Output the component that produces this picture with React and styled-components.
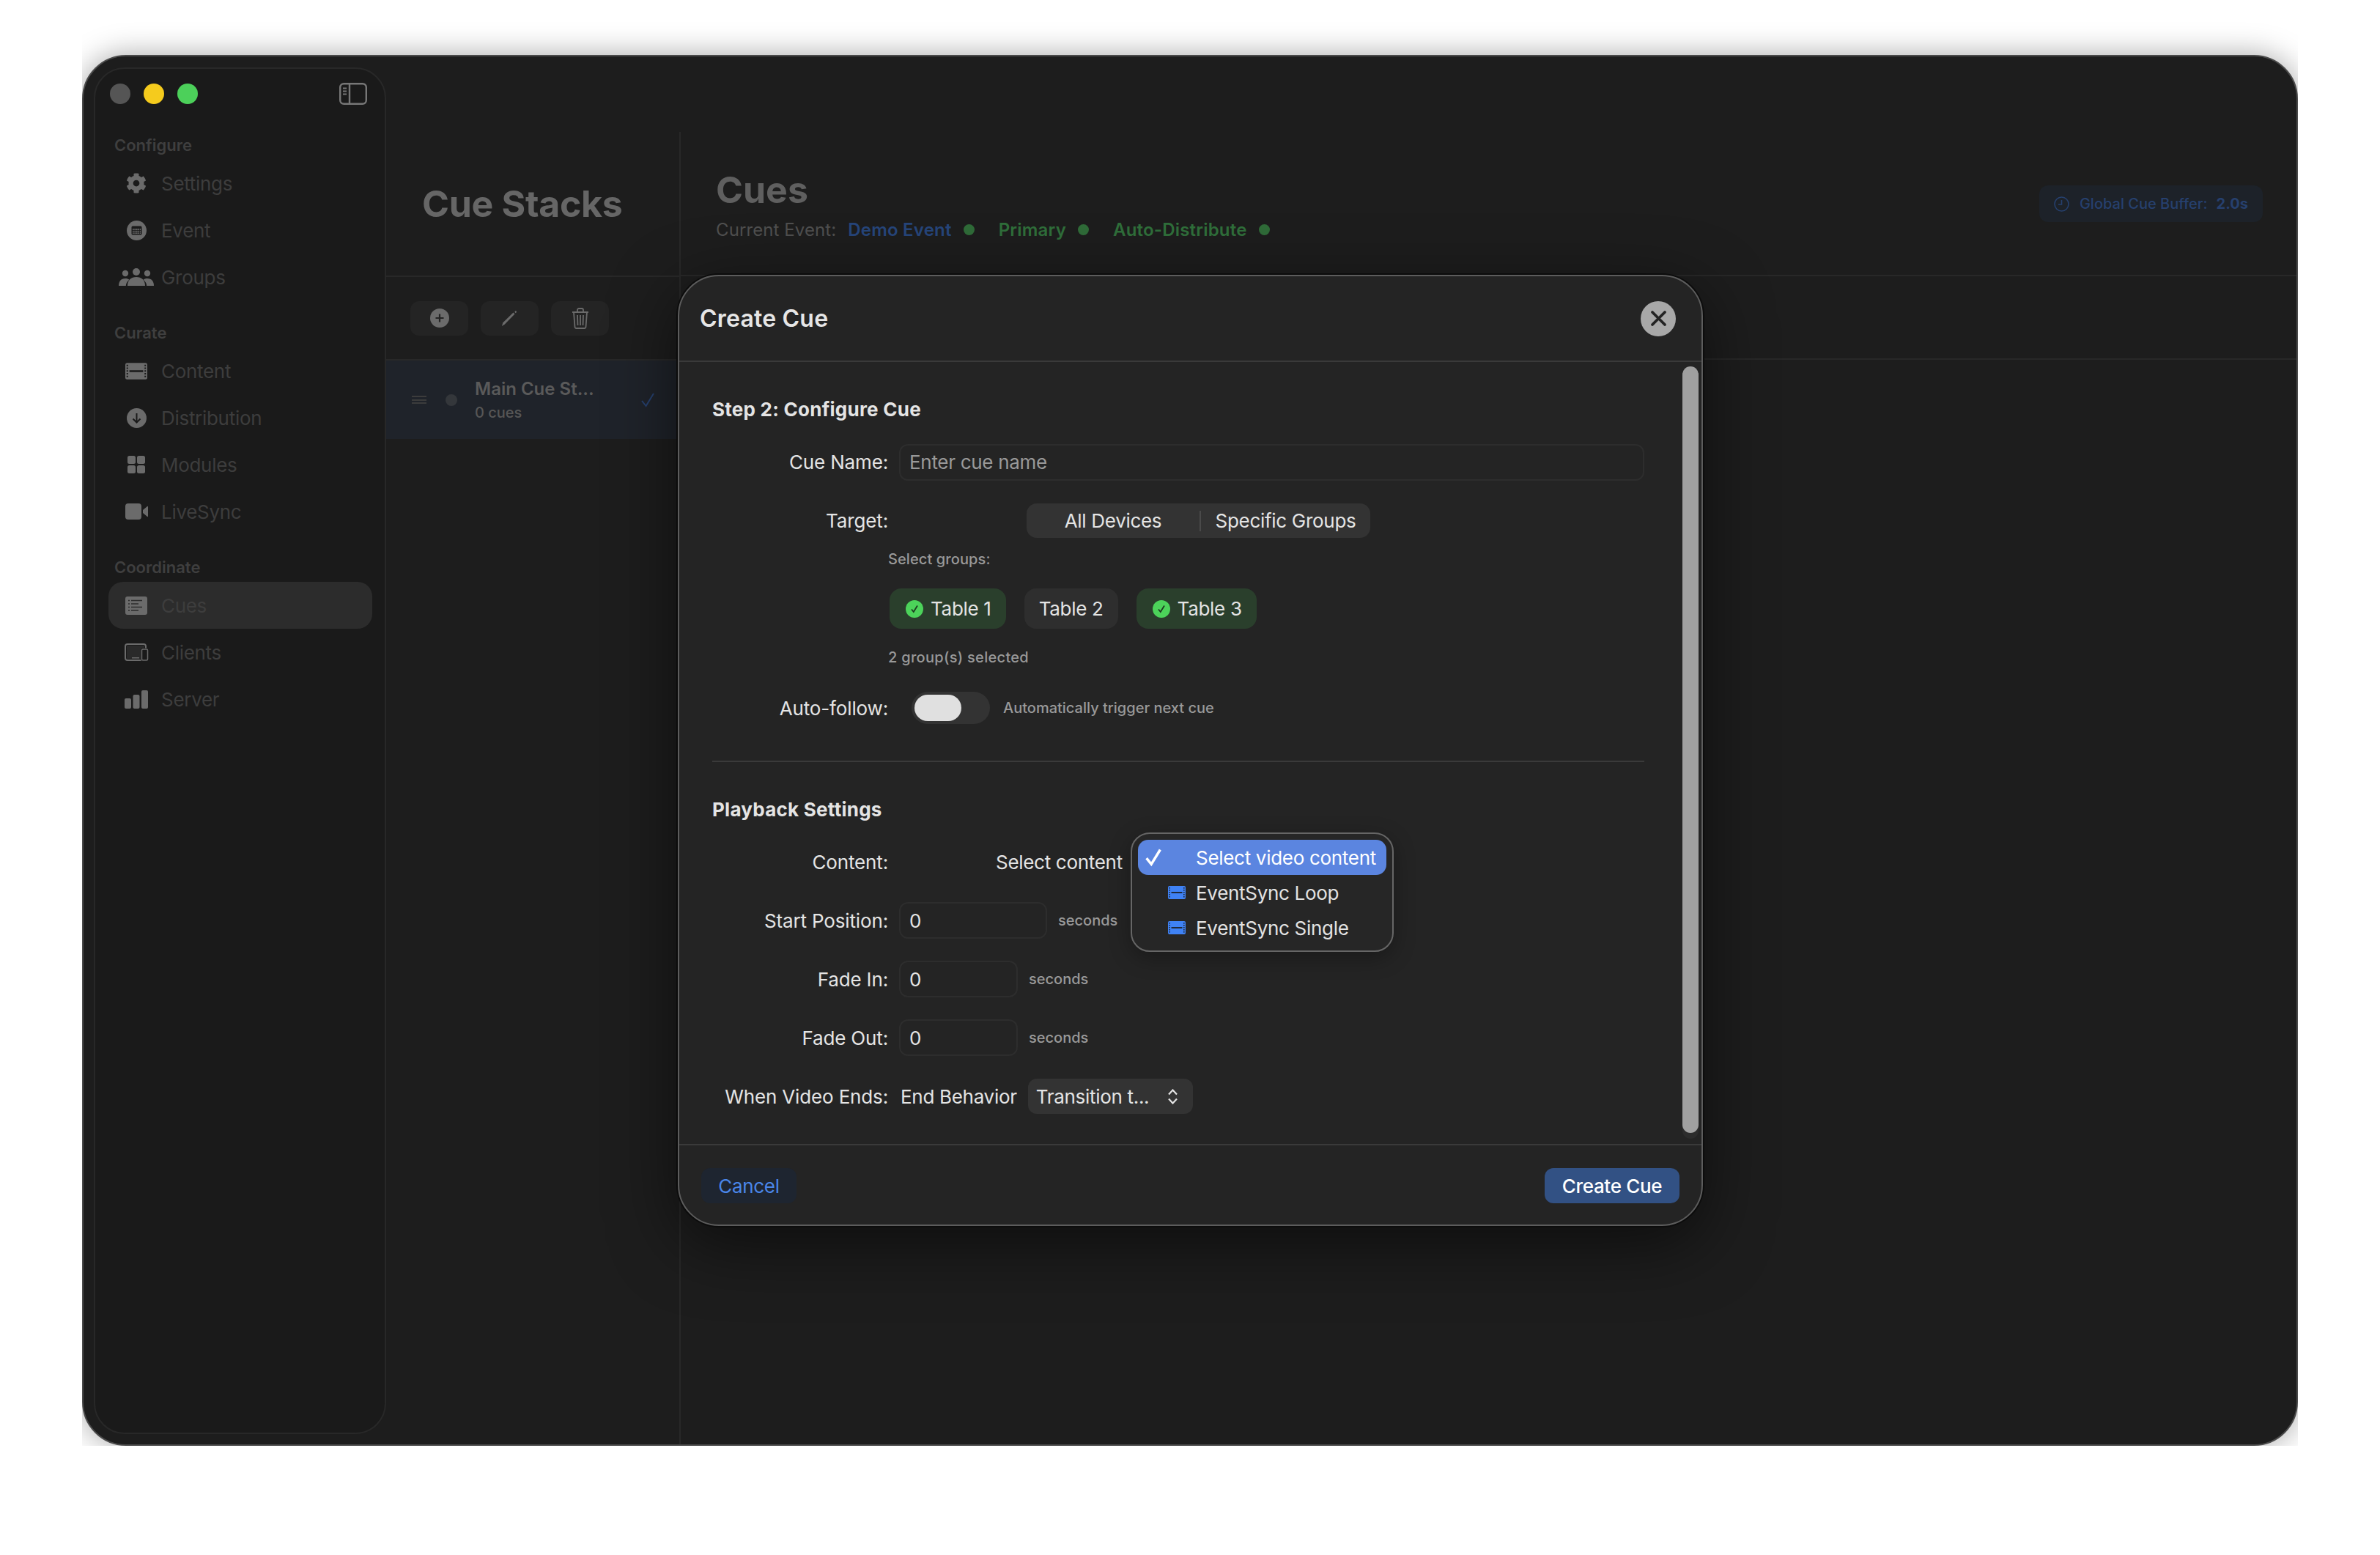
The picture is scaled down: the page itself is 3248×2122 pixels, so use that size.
import React from "react";
import styled, { createGlobalStyle } from "styled-components";
import { FaCog } from "react-icons/fa";

const GlobalStyle = createGlobalStyle`
  html, body {
    margin: 0;
    padding: 0;
    background: #fff;
    font-family: Inter, "Liberation Sans", sans-serif;
    -webkit-font-smoothing: antialiased;
  }
  * {
    box-sizing: border-box;
  }
`;

/* drawn icons */
const FilmIcon = ({ w = 24, h = 18, fill = "#3f82f5", ink = "#1f2a3c" }) => (
  <svg width={w} height={h} viewBox="0 0 24 18">
    <rect width="24" height="18" rx="2" fill={fill} />
    <rect x="4.5" y="8" width="15" height="2" fill={ink} />
    <rect x="4.5" y="1.5" width="15" height="5.5" fill={fill} />
    {[2, 5, 8, 11, 14].map((y) => (
      <g key={y} fill={ink}>
        <rect x="1.4" y={y} width="1.6" height="1.6" />
        <rect x="21" y={y} width="1.6" height="1.6" />
      </g>
    ))}
  </svg>
);

const EventIcon = () => (
  <svg width="27" height="27" viewBox="0 0 27 27">
    <circle cx="13.5" cy="13.5" r="13.5" fill="currentColor" />
    <rect x="6.5" y="7.5" width="14" height="12" rx="1.5" fill="#1a1a1a" />
    <rect x="8" y="11" width="11" height="7" fill="#6b6b6b" />
    <path d="M10 11v7M12.5 11v7M15 11v7M17.5 11v7M8 13.5h11M8 16h11" stroke="#1a1a1a" strokeWidth="0.8" />
  </svg>
);

const GroupsIcon = () => (
  <svg width="48" height="24" viewBox="0 0 48 24" fill="currentColor">
    <circle cx="24" cy="5" r="5" />
    <circle cx="9" cy="7" r="4.2" />
    <circle cx="39" cy="7" r="4.2" />
    <path d="M12 24c0-8 5-12 12-12s12 4 12 12z" />
    <path d="M0 24c0-6 3-10 9-10 2.4 0 4 .6 5.4 1.8C11.6 18 10 20.600 9.800 24z" />
    <path d="M48 24c0-6-3-10-9-10-2.400 0-4 .6-5.400 1.800 2.800 2.200 4.400 4.800 4.600 8.200z" />
  </svg>
);

const DistributionIcon = () => (
  <svg width="27" height="27" viewBox="0 0 27 27">
    <circle cx="13.5" cy="13.5" r="13.5" fill="currentColor" />
    <path d="M13.5 7v12M8.500 14.500l5 5 5-5" fill="none" stroke="#1a1a1a" strokeWidth="2" />
  </svg>
);

const ModulesIcon = () => (
  <svg width="24" height="24" viewBox="0 0 24 24" fill="currentColor">
    <rect width="11" height="11" rx="2.500" />
    <rect x="13" width="11" height="11" rx="2.500" />
    <rect y="13" width="11" height="11" rx="2.500" />
    <rect x="13" y="13" width="11" height="11" rx="2.500" />
  </svg>
);

const VideoIcon = () => (
  <svg width="31" height="22" viewBox="0 0 31 22" fill="currentColor">
    <rect width="22" height="22" rx="4" />
    <path d="M24 9l6-5c.5-.4 1-.1 1 .5v13c0 .6-.5.9-1 .5l-6-5z" />
  </svg>
);

const CuesIcon = () => (
  <svg width="30" height="25" viewBox="0 0 30 25">
    <rect width="30" height="25" rx="3" fill="currentColor" />
    <path d="M8 5.500h15M8 10h10M8 14.500h15M8 19h10M4 5.500h2M4 10h2M4 14.500h2M4 19h2" stroke="#2c2c2c" strokeWidth="1.600" />
  </svg>
);

const ClientsIcon = () => (
  <svg width="33" height="24" viewBox="0 0 33 24">
    <rect x="1" y="1" width="28" height="22" rx="3" fill="none" stroke="currentColor" strokeWidth="2" />
    <rect x="3" y="3" width="24" height="18" fill="#2a2a2a" />
    <rect x="10" y="19" width="10" height="1.500" fill="currentColor" />
    <rect x="22" y="6.500" width="11" height="17.500" rx="2" fill="#1a1a1a" />
    <rect x="23.500" y="8" width="8" height="15" rx="1.500" fill="none" stroke="currentColor" strokeWidth="1.500" />
  </svg>
);

const ServerIcon = () => (
  <svg width="32" height="25" viewBox="0 0 32 25" fill="currentColor">
    <rect y="11" width="9" height="14" rx="2" />
    <rect x="11.500" y="6" width="9" height="19" rx="2" />
    <rect x="23" width="9" height="25" rx="2" />
  </svg>
);

const PlusIcon = () => (
  <svg width="26" height="26" viewBox="0 0 26 26">
    <circle cx="13" cy="13" r="13" fill="#6b6b6b" />
    <path d="M13 7.500v11M7.500 13h11" stroke="#232323" strokeWidth="2.200" />
  </svg>
);

const PencilIcon = () => (
  <svg width="21" height="21" viewBox="0 0 21 21" fill="#6b6b6b">
    <path d="M0 21l1.200-4.500L15.500 2.500l2 2L3.800 18.500z" />
    <path d="M18 .5l1.300-.5.700 2-1.300 1.300-1.300-1.300z" />
  </svg>
);

const TrashIcon = () => (
  <svg width="24" height="29" viewBox="0 0 24 29" fill="none" stroke="#6b6b6b" strokeWidth="1.800">
    <path d="M1 6h22M8 6V3c0-1 .8-2 2-2h4c1.200 0 2 1 2 2v3" />
    <path d="M3 6l1.500 20c.1 1.200 1 2 2 2h11c1 0 1.900-.8 2-2L21 6" />
    <path d="M8 10l.5 14M12 10v14M16 10l-.5 14" />
  </svg>
);

const ClockIcon = () => (
  <svg width="21" height="21" viewBox="0 0 21 21" fill="none" stroke="#26406e" strokeWidth="1.600">
    <circle cx="10.500" cy="10.500" r="9.500" />
    <path d="M10.500 5v6H6" />
  </svg>
);

const SidebarIcon = () => (
  <svg width="38" height="30" viewBox="0 0 38 30" fill="none" stroke="#777" strokeWidth="2.400">
    <rect x="1.200" y="1.200" width="35.600" height="27.600" rx="5" />
    <path d="M14 1.200v27.600" />
    <path d="M5 7.500h5M5 11.500h5M5 15.500h5" strokeWidth="2" />
  </svg>
);

const CheckGlyph = ({ size = 12, color = "#1d3a20", width = 1.800 }) => (
  <svg width={size} height={size} viewBox="0 0 12 12" fill="none" stroke={color} strokeWidth={width}>
    <path d="M2 6.500l2.800 3.500L10 1.500" />
  </svg>
);

const Chevrons = () => (
  <svg width="15" height="21" viewBox="0 0 15 21" fill="none" stroke="#e2e2e2" strokeWidth="2.200">
    <path d="M2 7.500l5.500-6 5.500 6M2 13.500l5.500 6 5.500-6" />
  </svg>
);

const CloseX = () => (
  <svg width="23" height="23" viewBox="0 0 23 23" fill="none" stroke="#232323" strokeWidth="3.800" strokeLinecap="round">
    <path d="M3 3l17 17M20 3L3 20" />
  </svg>
);

const navSections = [
  {
    title: "Configure",
    items: [
      { label: "Settings", icon: <FaCog size={28} /> },
      { label: "Event", icon: <EventIcon /> },
      { label: "Groups", icon: <GroupsIcon /> },
    ],
  },
  {
    title: "Curate",
    items: [
      { label: "Content", icon: <FilmIcon w={30} h={23} fill="#6b6b6b" ink="#1a1a1a" /> },
      { label: "Distribution", icon: <DistributionIcon /> },
      { label: "Modules", icon: <ModulesIcon /> },
      { label: "LiveSync", icon: <VideoIcon /> },
    ],
  },
  {
    title: "Coordinate",
    items: [
      { label: "Cues", icon: <CuesIcon />, active: true },
      { label: "Clients", icon: <ClientsIcon /> },
      { label: "Server", icon: <ServerIcon /> },
    ],
  },
];

const timingRows = [
  { label: "Start Position:", width: 202 },
  { label: "Fade In:", width: 162 },
  { label: "Fade Out:", width: 162 },
];

export default function App() {
  return (
    <>
      <GlobalStyle />
      <Frame>
        <Window>
          <Sidebar>
            <TitleBar>
              <Lights>
                <Light $color="#555555" />
                <Light $color="#f5cb1d" />
                <Light $color="#4cd05a" />
              </Lights>
              <SidebarIcon />
            </TitleBar>
            <Nav>
              {navSections.map((section) => (
                <NavSection key={section.title}>
                  <SectionLabel>{section.title}</SectionLabel>
                  {section.items.map((item) => (
                    <NavItem key={item.label} $active={item.active}>
                      <NavIcon>{item.icon}</NavIcon>
                      {item.label}
                    </NavItem>
                  ))}
                </NavSection>
              ))}
            </Nav>
          </Sidebar>

          <StacksColumn>
            <StacksPane>
              <StacksHeader>Cue Stacks</StacksHeader>
              <Toolbar>
                <ToolButton><PlusIcon /></ToolButton>
                <ToolButton><PencilIcon /></ToolButton>
                <ToolButton><TrashIcon /></ToolButton>
              </Toolbar>
              <StackRow>
                <DragHandle />
                <StackDot />
                <StackText>
                  <StackName>Main Cue St...</StackName>
                  <StackCount>0 cues</StackCount>
                </StackText>
                <StackCheck>
                  <CheckGlyph size={24} color="#26406e" width={1.000} />
                </StackCheck>
              </StackRow>
            </StacksPane>
          </StacksColumn>

          <CuesColumn>
            <CuesHeader>
              <div>
                <CuesTitle>Cues</CuesTitle>
                <StatusLine>
                  <StatusLabel>Current Event:</StatusLabel>
                  <StatusValue $color="#26457a">Demo Event</StatusValue>
                  <StatusDot />
                  <StatusValue $color="#2f6e3a">Primary</StatusValue>
                  <StatusDot />
                  <StatusValue $color="#2f6e3a">Auto-Distribute</StatusValue>
                  <StatusDot />
                </StatusLine>
              </div>
              <BufferBadge>
                <ClockIcon />
                <span>Global Cue Buffer:</span>
                <BufferValue>2.0s</BufferValue>
              </BufferBadge>
            </CuesHeader>
            <CuesToolbar />
          </CuesColumn>

          <Modal>
            <ModalHeader>
              <ModalTitle>Create Cue</ModalTitle>
              <CloseButton><CloseX /></CloseButton>
            </ModalHeader>

            <ModalBody>
              <SectionHeading>Step 2: Configure Cue</SectionHeading>

              <FormRow $top={29} $height={51}>
                <FieldLabel>Cue Name:</FieldLabel>
                <TextBox $grow $muted>Enter cue name</TextBox>
              </FormRow>

              <FormRow $top={31} $height={47}>
                <FieldLabel>Target:</FieldLabel>
                <Segmented>
                  <Segment $width={236}>All Devices</Segment>
                  <Segment $width={233} $divided>Specific Groups</Segment>
                </Segmented>
              </FormRow>

              <HintLine $top={15}>Select groups:</HintLine>

              <Chips>
                <Chip $selected>
                  <ChipCheck><CheckGlyph /></ChipCheck>
                  Table 1
                </Chip>
                <Chip>Table 2</Chip>
                <Chip $selected>
                  <ChipCheck><CheckGlyph /></ChipCheck>
                  Table 3
                </Chip>
              </Chips>

              <HintLine $top={25} $track={0.3}>2 group(s) selected</HintLine>

              <FormRow $top={33} $height={44}>
                <FieldLabel>Auto-follow:</FieldLabel>
                <ToggleGroup>
                  <Toggle><Knob /></Toggle>
                  <SmallNote>Automatically trigger next cue</SmallNote>
                </ToggleGroup>
              </FormRow>

              <Divider />

              <SectionHeading $top={48}>Playback Settings</SectionHeading>

              <FormRow $top={29} $height={50}>
                <FieldLabel>Content:</FieldLabel>
                <PlainValue $indent={132}>Select content</PlainValue>
              </FormRow>

              {timingRows.map((row) => (
                <FormRow key={row.label} $top={30} $height={50}>
                  <FieldLabel>{row.label}</FieldLabel>
                  <TimingCell>
                    <TextBox $width={row.width}>0</TextBox>
                    <SmallNote>seconds</SmallNote>
                  </TimingCell>
                </FormRow>
              ))}

              <FormRow $top={30} $height={50}>
                <FieldLabel>When Video Ends:</FieldLabel>
                <TimingCell>
                  <PlainValue $indent={2}>End Behavior</PlainValue>
                  <SelectButton>
                    Transition t...
                    <Chevrons />
                  </SelectButton>
                </TimingCell>
              </FormRow>

              <ScrollTrack>
                <ScrollThumb />
              </ScrollTrack>

              <Menu>
                <MenuItem $active>
                  <MenuMark $indent={7}><CheckGlyph size={28} color="#fff" width={1.500} /></MenuMark>
                  Select video content
                </MenuItem>
                <MenuItem>
                  <MenuMark $indent={41}><FilmIcon /></MenuMark>
                  EventSync Loop
                </MenuItem>
                <MenuItem>
                  <MenuMark $indent={41}><FilmIcon /></MenuMark>
                  EventSync Single
                </MenuItem>
              </Menu>
            </ModalBody>

            <ModalFooter>
              <CancelButton>Cancel</CancelButton>
              <PrimaryButton>Create Cue</PrimaryButton>
            </ModalFooter>
          </Modal>
        </Window>
      </Frame>
    </>
  );
}

const Frame = styled.div`
  width: 3024px;
  height: 1973px;
  margin-left: 112px;
  padding-top: 75px;
  overflow: hidden;
`;

const Window = styled.div`
  position: relative;
  display: flex;
  height: 1898px;
  background: #1d1d1d;
  border: 2px solid #4a4a4a;
  border-radius: 60px;
  box-shadow: 0 0 40px rgba(0, 0, 0, 0.35);
  overflow: hidden;
`;

const Sidebar = styled.aside`
  flex: none;
  width: 399px;
  margin: 15px 0 14px 14px;
  background: #1a1a1a;
  border: 2px solid #282828;
  border-radius: 42px;
`;

const TitleBar = styled.div`
  display: flex;
  align-items: center;
  justify-content: space-between;
  height: 68px;
  padding: 0 24px 0 20px;
`;

const Lights = styled.div`
  display: flex;
  gap: 18px;
`;

const Light = styled.span`
  width: 28px;
  height: 28px;
  border-radius: 50%;
  background: ${(p) => p.$color};
`;

const Nav = styled.nav`
  display: flex;
  flex-direction: column;
  gap: 29px;
  padding: 21px 17px 0 18px;
`;

const NavSection = styled.div`
  display: flex;
  flex-direction: column;
`;

const SectionLabel = styled.div`
  height: 30px;
  margin-bottom: 5px;
  padding-left: 8px;
  font-size: 22px;
  font-weight: 600;
  line-height: 30px;
  color: #3f3f3f;
`;

const NavItem = styled.div`
  display: flex;
  align-items: center;
  gap: 4px;
  height: 64px;
  padding-left: 8px;
  border-radius: 20px;
  background: ${(p) => (p.$active ? "#2c2c2c" : "transparent")};
  font-size: 26px;
  letter-spacing: -0.3px;
  color: #3d3d3d;
`;

const NavIcon = styled.span`
  display: flex;
  align-items: center;
  justify-content: center;
  width: 60px;
  color: #6b6b6b;
`;

const StacksColumn = styled.section`
  flex: none;
  width: 402px;
  padding-top: 103px;
`;

const StacksPane = styled.div`
  height: 100%;
  border-right: 2px solid #282828;
`;

const StacksHeader = styled.h1`
  display: flex;
  align-items: center;
  height: 198px;
  margin: 0;
  padding-left: 49px;
  border-bottom: 2px solid #282828;
  font-size: 50px;
  font-weight: 700;
  letter-spacing: -0.3px;
  color: #666;
`;

const Toolbar = styled.div`
  display: flex;
  align-items: center;
  gap: 17px;
  height: 114px;
  padding-left: 33px;
  border-bottom: 2px solid #282828;
`;

const ToolButton = styled.div`
  display: flex;
  align-items: center;
  justify-content: center;
  width: 79px;
  height: 47px;
  border-radius: 12px;
  background: #242424;
`;

const StackRow = styled.div`
  display: flex;
  align-items: center;
  height: 107px;
  padding-left: 35px;
  background: #1f232a;
`;

const DragHandle = styled.span`
  width: 20px;
  height: 11px;
  border-top: 2px solid #3c3c3c;
  border-bottom: 2px solid #3c3c3c;
  background: linear-gradient(#3c3c3c, #3c3c3c) center / 100% 2px no-repeat;
`;

const StackDot = styled.span`
  width: 16px;
  height: 16px;
  margin: 0 24px 0 26px;
  border-radius: 50%;
  background: #34373b;
`;

const StackText = styled.div`
  display: flex;
  flex-direction: column;
  gap: 4px;
  width: 224px;
`;

const StackName = styled.div`
  font-size: 24px;
  font-weight: 600;
  line-height: 30px;
  color: #5a5a5a;
`;

const StackCount = styled.div`
  font-size: 20px;
  font-weight: 500;
  line-height: 26px;
  color: #565656;
`;

const StackCheck = styled.span`
  display: flex;
`;

const CuesColumn = styled.section`
  flex: 1;
`;

const CuesHeader = styled.header`
  display: flex;
  justify-content: space-between;
  height: 300px;
  padding: 150px 46px 0 48px;
  border-bottom: 2px solid #282828;
`;

const CuesToolbar = styled.div`
  height: 114px;
  border-bottom: 2px solid #282828;
`;

const CuesTitle = styled.h2`
  height: 64px;
  margin: 0 0 6px;
  font-size: 50px;
  font-weight: 700;
  line-height: 64px;
  color: #5f5f5f;
`;

const StatusLine = styled.div`
  display: flex;
  align-items: center;
  height: 32px;
  font-size: 24px;
`;

const StatusLabel = styled.span`
  margin-right: 16px;
  letter-spacing: 0.1px;
  color: #4f4f4f;
`;

const StatusValue = styled.span`
  font-weight: 600;
  letter-spacing: 0.2px;
  color: ${(p) => p.$color};
`;

const StatusDot = styled.span`
  width: 15px;
  height: 15px;
  margin: 0 33px 0 16px;
  border-radius: 50%;
  background: #2f6b38;
`;

const BufferBadge = styled.div`
  display: flex;
  align-items: center;
  gap: 10px;
  height: 50px;
  margin-top: 26px;
  padding: 0 20px;
  border-radius: 12px;
  background: #1d2229;
  font-size: 20px;
  font-weight: 500;
  color: #26406e;

  svg {
    margin-right: 4px;
  }
`;

const BufferValue = styled.span`
  margin-left: 2px;
  font-weight: 700;
`;

const Modal = styled.div`
  position: absolute;
  left: 811px;
  top: 298px;
  display: flex;
  flex-direction: column;
  width: 1399px;
  height: 1298px;
  background: #242424;
  border: 2px solid #5c5c5c;
  border-radius: 56px;
  box-shadow: 0 0 0 2px #0c0c0c, 0 24px 90px rgba(0, 0, 0, 0.55);
  overflow: hidden;
  color: #e4e4e4;
`;

const ModalHeader = styled.header`
  flex: none;
  display: flex;
  align-items: center;
  justify-content: space-between;
  height: 117px;
  padding: 0 35px 0 28px;
  border-bottom: 2px solid #3a3a3a;
`;

const ModalTitle = styled.h3`
  margin: 0;
  font-size: 32px;
  font-weight: 600;
  letter-spacing: 0.2px;
  color: #e6e6e6;
`;

const CloseButton = styled.div`
  display: flex;
  align-items: center;
  justify-content: center;
  width: 48px;
  height: 48px;
  border-radius: 50%;
  background: #a8a8a8;
`;

const ModalBody = styled.div`
  position: relative;
  flex: 1;
  padding: 48px 78px 0 45px;
  letter-spacing: -0.3px;
`;

const SectionHeading = styled.h4`
  height: 34px;
  margin: ${(p) => p.$top || 0}px 0 0;
  font-size: 26px;
  font-weight: 700;
  line-height: 34px;
  letter-spacing: 0.25px;
  color: #e4e4e4;
`;

const FormRow = styled.div`
  display: grid;
  grid-template-columns: 240px 1fr;
  column-gap: 15px;
  align-items: center;
  height: ${(p) => p.$height}px;
  margin-top: ${(p) => p.$top}px;
`;

const FieldLabel = styled.div`
  font-size: 26px;
  letter-spacing: -0.15px;
  text-align: right;
  white-space: nowrap;
  color: #e4e4e4;
`;

const TextBox = styled.div`
  display: flex;
  align-items: center;
  width: ${(p) => (p.$grow ? "100%" : `${p.$width}px`)};
  height: 50px;
  padding-left: 12px;
  border: 2px solid #2d2d2d;
  border-radius: 12px;
  font-size: 26px;
  color: ${(p) => (p.$muted ? "#999" : "#e4e4e4")};
`;

const Segmented = styled.div`
  display: flex;
  align-items: center;
  width: 469px;
  height: 47px;
  margin-left: 174px;
  border-radius: 14px;
  background: #333;
`;

const Segment = styled.div`
  width: ${(p) => p.$width}px;
  height: 28px;
  border-left: ${(p) => (p.$divided ? "2px solid #4a4a4a" : "none")};
  font-size: 26px;
  line-height: 28px;
  text-align: center;
  color: #e4e4e4;
`;

const HintLine = styled.div`
  height: 28px;
  margin-top: ${(p) => p.$top}px;
  padding-left: 240px;
  font-size: 20px;
  font-weight: 500;
  line-height: 28px;
  letter-spacing: ${(p) => p.$track || 0.1}px;
  color: #999;
`;

const Chips = styled.div`
  display: flex;
  gap: 25px;
  margin-top: 26px;
  padding-left: 242px;
`;

const Chip = styled.div`
  display: flex;
  align-items: center;
  gap: 10px;
  height: 55px;
  padding: 0 20px 0 ${(p) => (p.$selected ? 22 : 20)}px;
  border-radius: 16px;
  background: ${(p) => (p.$selected ? "#2a3f2c" : "#2e2e2e")};
  font-size: 26px;
  color: #e4e4e4;
`;

const ChipCheck = styled.span`
  display: flex;
  align-items: center;
  justify-content: center;
  width: 24px;
  height: 24px;
  border-radius: 50%;
  background: #4cd35a;
`;

const ToggleGroup = styled.div`
  display: flex;
  align-items: center;
  gap: 18px;
  margin-left: 17px;
`;

const Toggle = styled.div`
  display: flex;
  align-items: center;
  width: 107px;
  height: 44px;
  padding-left: 4px;
  border-radius: 22px;
  background: #333;
`;

const Knob = styled.span`
  width: 64px;
  height: 36px;
  border-radius: 18px;
  background: #e0e0e0;
`;

const SmallNote = styled.span`
  font-size: 20px;
  font-weight: 500;
  letter-spacing: 0;
  color: #999;
`;

const Divider = styled.hr`
  height: 2px;
  margin: 50px 0 0;
  border: 0;
  background: #3a3a3a;
`;

const PlainValue = styled.div`
  margin-left: ${(p) => p.$indent}px;
  font-size: 26px;
  color: #e4e4e4;
`;

const TimingCell = styled.div`
  display: flex;
  align-items: center;
  gap: 15px;
`;

const SelectButton = styled.div`
  display: flex;
  align-items: center;
  justify-content: space-between;
  width: 225px;
  height: 48px;
  padding: 0 20px 0 11px;
  border-radius: 12px;
  background: #333;
  font-size: 26px;
  white-space: nowrap;
  color: #e4e4e4;
`;

const ScrollTrack = styled.div`
  position: absolute;
  top: 6px;
  right: 4px;
  width: 22px;
  height: 1054px;
  border-radius: 11px;
  background: #2c2c2c;
`;

const ScrollThumb = styled.div`
  height: 1046px;
  border-radius: 11px;
  background: #a0a0a0;
`;

const Menu = styled.div`
  position: absolute;
  left: 616px;
  top: 642px;
  width: 359px;
  height: 163px;
  padding: 8px;
  border: 2px solid #666;
  border-radius: 26px;
  background: #262626;
  box-shadow: 0 8px 30px rgba(0, 0, 0, 0.3);
`;

const MenuItem = styled.div`
  display: flex;
  align-items: center;
  height: 48px;
  border-radius: 14px;
  background: ${(p) => (p.$active ? "#5b85e0" : "transparent")};
  font-size: 26px;
  white-space: nowrap;
  color: ${(p) => (p.$active ? "#fff" : "#e2e2e2")};
`;

const MenuMark = styled.span`
  display: flex;
  width: 79px;
  padding-left: ${(p) => p.$indent}px;
`;

const ModalFooter = styled.footer`
  flex: none;
  display: flex;
  align-items: center;
  justify-content: space-between;
  height: 110px;
  padding: 2px 30px 0;
  border-top: 2px solid #3a3a3a;
`;

const CancelButton = styled.div`
  display: flex;
  align-items: center;
  justify-content: center;
  width: 130px;
  height: 48px;
  border-radius: 12px;
  background: #1e2530;
  font-size: 26px;
  letter-spacing: -0.3px;
  color: #4a86e8;
`;

const PrimaryButton = styled.div`
  display: flex;
  align-items: center;
  justify-content: center;
  width: 184px;
  height: 48px;
  border-radius: 12px;
  background: #325184;
  font-size: 26px;
  font-weight: 500;
  letter-spacing: -0.3px;
  color: #fff;
`;
